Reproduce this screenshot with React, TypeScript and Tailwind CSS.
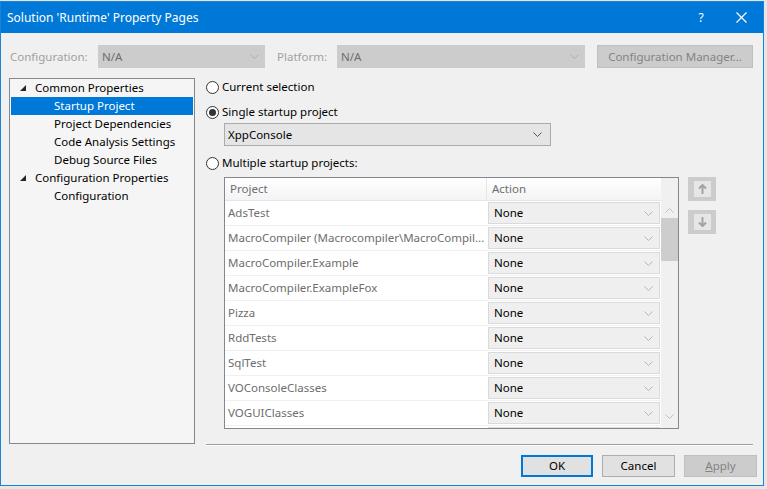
import React from 'react';

const font = "font-['Noto_Sans',sans-serif] text-[11.5px]";

const projects = [
    'AdsTest',
    'MacroCompiler (Macrocompiler\\MacroCompil...',
    'MacroCompiler.Example',
    'MacroCompiler.ExampleFox',
    'Pizza',
    'RddTests',
    'SqlTest',
    'VOConsoleClasses',
    'VOGUIClasses',
];

const Chevron = ({ className = '' }: { className?: string }) => (
    <svg width="9" height="5" viewBox="0 0 9 5" className={className}>
        <path d="M0.5 0.5 L4.5 4.5 L8.5 0.5" fill="none" stroke="currentColor" strokeWidth="1" />
    </svg>
);

const Radio = ({ checked }: { checked?: boolean }) => (
    <span className="w-[13px] h-[13px] rounded-full border border-[#333] bg-white flex items-center justify-center shrink-0">
        {checked && <span className="w-[7px] h-[7px] rounded-full bg-[#333]" />}
    </span>
);

const Expander = () => (
    <svg width="6" height="6" viewBox="0 0 6 6" className="shrink-0">
        <polygon points="6,0 6,6 0,6" fill="#262626" />
    </svg>
);

const TreeItem = ({ label, level, selected }: { label: string; level: 0 | 1; selected?: boolean }) => (
    <div className={`h-[18px] flex items-center ${selected ? 'bg-[#0078d7] text-white' : 'text-black'}`}>
        {level === 0 ? (
            <span className="flex items-center pl-[9px] gap-[9px]">
                <Expander />
                <span>{label}</span>
            </span>
        ) : (
            <span className="pl-[43px]">{label}</span>
        )}
    </div>
);

const ArrowButton = ({ down }: { down?: boolean }) => (
    <div className="w-[28px] h-[24px] bg-[#cccccc] flex items-center justify-center">
        <div className="w-[17px] h-[16px] bg-[#e6e6e6] flex items-center justify-center">
            <svg width="9" height="10" viewBox="0 0 9 10" className={down ? 'rotate-180' : ''}>
                <path d="M4.5 1 L4.5 10 M1 4.5 L4.5 1 L8 4.5" fill="none" stroke="#a3a3a3" strokeWidth="2" />
            </svg>
        </div>
    </div>
);

export default function App() {
    return (
        <div className={`w-[767px] h-[489px] bg-[#e6e6e6] pt-px overflow-hidden ${font}`}>
            <div className="w-[764px] h-[485px] border border-[#1883d7] bg-[#f0f0f0] flex flex-col">
                {/* title bar */}
                <div className="h-[31px] bg-[#0078d7] text-white flex items-center pl-[6px] text-[12px]">
                    <span className="flex-1">Solution 'Runtime' Property Pages</span>
                    <span className="w-[20px] text-center mr-[25px]">?</span>
                    <svg width="11" height="11" viewBox="0 0 11 11" className="mr-[16px]">
                        <path d="M0.5 0.5 L10.5 10.5 M10.5 0.5 L0.5 10.5" stroke="white" strokeWidth="1.2" />
                    </svg>
                </div>

                {/* configuration row */}
                <div className="mt-[12px] h-[23px] flex items-center pl-[9px]">
                    <span className="w-[88px] text-[#a0a0a0]">Configuration:</span>
                    <div className="w-[167px] h-[23px] bg-[#cccccc] flex items-center pl-[4px] pr-[6px] text-[#6d6d6d]">
                        <span className="flex-1">N/A</span>
                        <Chevron className="text-[#b0b0b0]" />
                    </div>
                    <span className="ml-[12px] w-[60px] text-[#a0a0a0]">Platform:</span>
                    <div className="w-[248px] h-[23px] bg-[#cccccc] flex items-center pl-[4px] pr-[6px] text-[#6d6d6d]">
                        <span className="flex-1">N/A</span>
                        <Chevron className="text-[#b0b0b0]" />
                    </div>
                    <div className="ml-[12px] w-[156px] h-[23px] bg-[#cccccc] border border-[#bfbfbf] flex items-center justify-center text-[#838383]">
                        Configuration Manager...
                    </div>
                </div>

                {/* main */}
                <div className="mt-[10px] flex pl-[8px]">
                    <div className="w-[186px] h-[366px] border border-[#828790] bg-[#f5f5f5] px-px">
                        <TreeItem label="Common Properties" level={0} />
                        <TreeItem label="Startup Project" level={1} selected />
                        <TreeItem label="Project Dependencies" level={1} />
                        <TreeItem label="Code Analysis Settings" level={1} />
                        <TreeItem label="Debug Source Files" level={1} />
                        <TreeItem label="Configuration Properties" level={0} />
                        <TreeItem label="Configuration" level={1} />
                    </div>

                    <div className="ml-[11px] flex flex-col w-[548px]">
                        <div className="h-[18px] flex items-center gap-[3px]">
                            <Radio />
                            <span>Current selection</span>
                        </div>
                        <div className="mt-[7px] h-[18px] flex items-center gap-[3px]">
                            <Radio checked />
                            <span>Single startup project</span>
                        </div>
                        <div className="mt-[2px] ml-[18px] w-[327px] h-[23px] bg-[#e5e5e5] border border-[#acacac] flex items-center pl-[3px] pr-[8px]">
                            <span className="flex-1">XppConsole</span>
                            <Chevron className="text-[#555]" />
                        </div>
                        <div className="mt-[8px] h-[18px] flex items-center gap-[3px]">
                            <Radio />
                            <span>Multiple startup projects:</span>
                        </div>

                        <div className="mt-[5px] ml-[18px] flex">
                            <div className="w-[455px] h-[252px] border border-[#828790] bg-white flex overflow-hidden">
                                <div className="flex-1 flex flex-col">
                                    <div className="h-[23px] shrink-0 flex bg-gradient-to-b from-white to-[#f3f4f6] border-b border-[#e5e5e5] text-[#6d6d6d]">
                                        <div className="w-[262px] border-r border-[#e5e5e5] flex items-center pl-[5px]">Project</div>
                                        <div className="flex-1 flex items-center pl-[5px]">Action</div>
                                    </div>
                                    {projects.map((p) => (
                                        <div key={p} className="h-[25px] shrink-0 flex border-b border-[#f0f0f0]">
                                            <div className="w-[263px] flex items-center pl-[3px] pr-[2px] text-[#6d6d6d] whitespace-nowrap overflow-hidden">
                                                {p}
                                            </div>
                                            <div className="flex-1 py-px pr-px">
                                                <div className="h-[22px] bg-[#efefef] border border-[#dadada] flex items-center pl-[5px] pr-[6px]">
                                                    <span className="flex-1">None</span>
                                                    <Chevron className="text-[#b5b5b5]" />
                                                </div>
                                            </div>
                                        </div>
                                    ))}
                                    <div className="h-[4px] shrink-0 flex">
                                        <div className="w-[263px]" />
                                        <div className="flex-1 pt-px pr-px">
                                            <div className="h-[6px] bg-[#efefef] border border-[#dadada]" />
                                        </div>
                                    </div>
                                </div>
                                <div className="w-[17px] bg-[#f0f0f0] flex flex-col items-center">
                                    <div className="h-[40px] flex items-end pb-[5px]">
                                        <Chevron className="text-[#c0c0c0] rotate-180" />
                                    </div>
                                    <div className="w-[17px] h-[43px] bg-[#cdcdcd]" />
                                    <div className="flex-1" />
                                    <div className="h-[14px] flex items-start">
                                        <Chevron className="text-[#c0c0c0]" />
                                    </div>
                                </div>
                            </div>
                            <div className="ml-[9px] flex flex-col gap-[9px]">
                                <ArrowButton />
                                <ArrowButton down />
                            </div>
                        </div>
                    </div>
                </div>

                {/* separator */}
                <div className="ml-[205px] w-[547px] h-[2px] border-t border-[#a0a0a0] border-b border-b-white" />

                {/* buttons */}
                <div className="mt-[9px] flex justify-end pr-[6px] gap-[9px]">
                    <div className="w-[72px] h-[22px] bg-[#e1e1e1] border-2 border-[#0078d7] flex items-center justify-center">OK</div>
                    <div className="w-[73px] h-[22px] bg-[#e1e1e1] border border-[#adadad] flex items-center justify-center">Cancel</div>
                    <div className="w-[73px] h-[22px] bg-[#cccccc] border border-[#bfbfbf] flex items-center justify-center text-[#838383]">
                        <span><span className="underline">A</span>pply</span>
                    </div>
                </div>
            </div>
        </div>
    );
}
